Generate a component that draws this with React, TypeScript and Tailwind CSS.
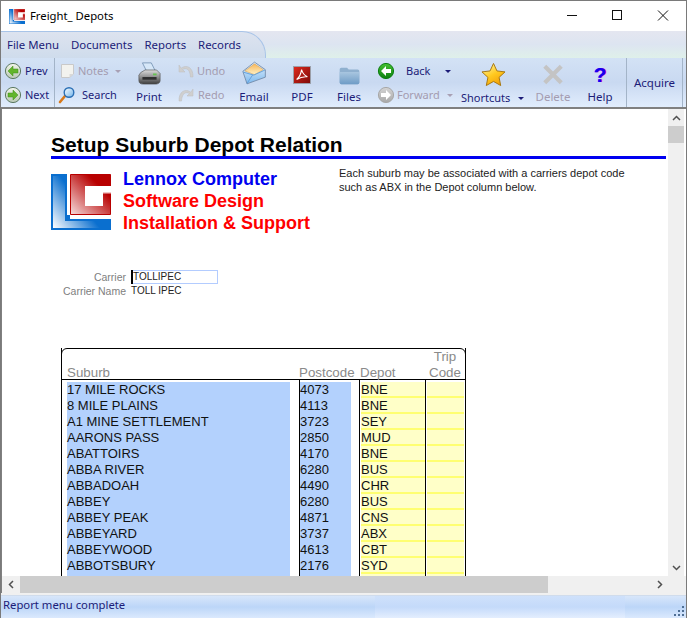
import React from "react";

const UI = "font-['Noto_Sans',sans-serif]";
const ARIAL = "font-['Liberation_Sans',Arial,sans-serif]";

const rows = [
  ["17 MILE ROCKS", "4073", "BNE"],
  ["8 MILE PLAINS", "4113", "BNE"],
  ["A1 MINE SETTLEMENT", "3723", "SEY"],
  ["AARONS PASS", "2850", "MUD"],
  ["ABATTOIRS", "4170", "BNE"],
  ["ABBA RIVER", "6280", "BUS"],
  ["ABBADOAH", "4490", "CHR"],
  ["ABBEY", "6280", "BUS"],
  ["ABBEY PEAK", "4871", "CNS"],
  ["ABBEYARD", "3737", "ABX"],
  ["ABBEYWOOD", "4613", "CBT"],
  ["ABBOTSBURY", "2176", "SYD"],
  ["", "", ""],
];

function Logo({ w, h, id }: { w: number; h: number; id: string }) {
  return (
    <svg width={w} height={h} viewBox="0 0 60 56" className="shrink-0 block">
      <defs>
        <linearGradient id={`${id}B`} x1="0" y1="1" x2="0.55" y2="0.62">
          <stop offset="0" stopColor="#ffffff" />
          <stop offset="1" stopColor="#0a6fcf" />
        </linearGradient>
        <linearGradient id={`${id}R`} x1="0" y1="1" x2="1" y2="0">
          <stop offset="0" stopColor="#f6dede" />
          <stop offset="0.72" stopColor="#b80000" />
          <stop offset="1" stopColor="#b80000" />
        </linearGradient>
      </defs>
      <path d="M0 0H16V41H19V45H60V56H0Z" fill="#0a6fcf" />
      <path d="M2 2H14V47H60V54H2Z" fill={`url(#${id}B)`} />
      <path d="M19.5 0.5H59.5V40.5H19.5Z" fill={`url(#${id}R)`} stroke="#b80000" strokeWidth="1" />
      <path d="M34 12H60V18H52V32H34Z" fill="#fff" />
      <rect x="52" y="18" width="8" height="1.5" fill="#f0c8c8" />
    </svg>
  );
}

function RoundArrow({ dir, kind }: { dir: "l" | "r"; kind: "soft" | "green" | "gray" }) {
  const id = `ra${dir}${kind}`;
  const stops =
    kind === "soft"
      ? ["#f2f5ea", "#b9c8b4"]
      : kind === "green"
      ? ["#46c232", "#0c7f10"]
      : ["#d4d4d4", "#a8a8a8"];
  const arrow = kind === "soft" ? "#62b52a" : "#fff";
  const pts = dir === "l" ? "M4 9L9 4V7H14V11H9V14Z" : "M14 9L9 4V7H4V11H9V14Z";
  return (
    <svg width="18" height="18" viewBox="0 0 18 18" className="shrink-0">
      <defs>
        <linearGradient id={id} x1="0" y1="0" x2="0" y2="1">
          <stop offset="0" stopColor={stops[0]} />
          <stop offset="1" stopColor={stops[1]} />
        </linearGradient>
      </defs>
      <circle cx="9" cy="9" r="7.6" fill={`url(#${id})`} stroke={kind === "soft" ? "#5d7a62" : stops[1]} strokeWidth="1" />
      <path d={pts} fill={arrow} stroke={kind === "soft" ? "#3f8f18" : "none"} strokeWidth="0.5" />
    </svg>
  );
}

function Caret({ grey }: { grey?: boolean }) {
  return (
    <svg width="6" height="3" viewBox="0 0 6 3" className="shrink-0">
      <path d="M0 0H6L3 3Z" fill={grey ? "#a8a0b4" : "#1c1c78"} />
    </svg>
  );
}

function NotesIcon() {
  return (
    <svg width="15" height="16" viewBox="0 0 15 16" className="shrink-0">
      <path d="M1.5 1.5H13.5V11L9.5 14.5H1.5Z" fill="#f2f2ee" stroke="#c9c9c9" />
      <path d="M13.5 11H9.5V14.5Z" fill="#d8d8d8" />
    </svg>
  );
}

function SearchIcon() {
  return (
    <svg width="18" height="18" viewBox="0 0 18 18" className="shrink-0 -ml-[2px]">
      <defs>
        <linearGradient id="glass" x1="0" y1="0" x2="1" y2="1">
          <stop offset="0" stopColor="#ffffff" />
          <stop offset="1" stopColor="#6fb3ea" />
        </linearGradient>
      </defs>
      <path d="M2 16L7 10" stroke="#d8791a" strokeWidth="2.6" strokeLinecap="round" />
      <circle cx="11" cy="6.5" r="4.8" fill="url(#glass)" stroke="#2a6fb5" strokeWidth="1.4" />
    </svg>
  );
}

function UndoIcon({ flip }: { flip?: boolean }) {
  return (
    <svg width="16" height="14" viewBox="0 0 16 14" className={flip ? "shrink-0 -scale-x-100" : "shrink-0"}>
      <path d="M1 1V8H7L4.6 5.6C7.5 3.6 12 4.5 12.5 13H15C15.5 3.5 8.5 0 3.2 4.2Z" fill="#cfcfcf" stroke="#bdbdbd" strokeWidth="0.5" />
    </svg>
  );
}

function PrinterIcon() {
  return (
    <svg width="23" height="23" viewBox="0 0 26 26">
      <defs>
        <linearGradient id="pr" x1="0" y1="0" x2="0" y2="1">
          <stop offset="0" stopColor="#dcdcdc" />
          <stop offset="0.5" stopColor="#8f8f8f" />
          <stop offset="1" stopColor="#3c3c3c" />
        </linearGradient>
      </defs>
      <path d="M5 1H15L20 11H10Z" fill="#d6e7f8" stroke="#6f8db0" strokeWidth="0.9" />
      <path d="M3 12L8 9H21L25 13V21C25 24 22 25 20 25H6C3 25 1 24 1 21V15Z" fill="url(#pr)" stroke="#4f4f4f" strokeWidth="0.7" />
      <rect x="5" y="17" width="16" height="3" fill="#2f2f2f" />
      <rect x="17" y="13" width="4" height="2" fill="#65c34f" />
    </svg>
  );
}

function MailIcon() {
  return (
    <svg width="25" height="24" viewBox="0 0 30 28">
      <defs>
        <linearGradient id="mb" x1="0" y1="0" x2="0" y2="1">
          <stop offset="0" stopColor="#e9f4ff" />
          <stop offset="1" stopColor="#7db9ee" />
        </linearGradient>
        <linearGradient id="mg" x1="0" y1="0" x2="0" y2="1">
          <stop offset="0" stopColor="#f8b75a" />
          <stop offset="1" stopColor="#fff2c8" />
        </linearGradient>
      </defs>
      <path d="M1 12L15 1L28 10L28 19L6 27L1 12Z" fill="url(#mb)" stroke="#6f86a3" />
      <path d="M3.5 11.5L15 3L25.5 10L15 16Z" fill="url(#mg)" stroke="#d79b4a" strokeWidth="0.6" />
      <path d="M1.5 13L14 16.5L27.5 10.5M6 26.5L13 16" fill="none" stroke="#5a9ad8" strokeWidth="1" />
    </svg>
  );
}

function PdfIcon() {
  return (
    <svg width="18" height="18" viewBox="0 0 20 20" className="mb-[1px]">
      <defs>
        <linearGradient id="pd" x1="0" y1="0" x2="1" y2="1">
          <stop offset="0" stopColor="#e02a1e" />
          <stop offset="1" stopColor="#7d0a08" />
        </linearGradient>
      </defs>
      <rect x="0.5" y="0.5" width="19" height="19" fill="url(#pd)" stroke="#9aa3ad" />
      <path d="M9.5 4C9 8 7 12.5 4 15C8 12.5 12 11.5 16 12C12.5 10.5 10.5 7.5 9.5 4Z" fill="none" stroke="#fff" strokeWidth="1.2" />
    </svg>
  );
}

function FolderIcon() {
  return (
    <svg width="23" height="18" viewBox="0 0 26 22">
      <defs>
        <linearGradient id="fd" x1="0" y1="0" x2="0" y2="1">
          <stop offset="0" stopColor="#a9c6e0" />
          <stop offset="1" stopColor="#6f9cc6" />
        </linearGradient>
      </defs>
      <path d="M1 3C1 2 2 1 3 1H10L12 3H23C24 3 25 4 25 5V19C25 20 24 21 23 21H3C2 21 1 20 1 19Z" fill="#8fb0cf" />
      <path d="M1 6H25V19C25 20 24 21 23 21H3C2 21 1 20 1 19Z" fill="url(#fd)" />
    </svg>
  );
}

function StarIcon() {
  return (
    <svg width="25" height="25" viewBox="0 0 26 25">
      <defs>
        <linearGradient id="st" x1="0.2" y1="0" x2="0.8" y2="1">
          <stop offset="0" stopColor="#fff39a" />
          <stop offset="0.5" stopColor="#ffc91f" />
          <stop offset="1" stopColor="#f19a05" />
        </linearGradient>
      </defs>
      <path d="M13 1L16.6 8.8L25 9.8L18.8 15.5L20.5 24L13 19.7L5.5 24L7.2 15.5L1 9.8L9.4 8.8Z" fill="url(#st)" stroke="#a67610" strokeWidth="1" strokeLinejoin="round" />
    </svg>
  );
}

function DeleteIcon() {
  return (
    <svg width="22" height="21" viewBox="0 0 24 22">
      <path d="M3 2L21 20M21 2L3 20" stroke="#c4c4c4" strokeWidth="4.6" />
    </svg>
  );
}

function BigTool({ w, icon, label, grey }: { w: string; icon: React.ReactNode; label: string; grey?: boolean }) {
  return (
    <div className={`${w} shrink-0 h-full flex flex-col items-center`}>
      <div className="h-[27px] flex items-end justify-center">{icon}</div>
      <div className={`mt-[4px] text-[11.5px] leading-[16px] whitespace-nowrap ${grey ? "text-[#a49cb0]" : "text-[#1c1c78]"}`}>{label}</div>
    </div>
  );
}

function SmallRow({ icon, label, grey, caret, gap }: { icon: React.ReactNode; label: string; grey?: boolean; caret?: React.ReactNode; gap: string }) {
  return (
    <div className="h-[24px] flex items-center whitespace-nowrap">
      {icon}
      <span className={`${gap} text-[11px] ${grey ? "text-[#a49cb0]" : "text-[#1c1c78]"}`}>{label}</span>
      {caret}
    </div>
  );
}

function Vsep() {
  return <div className="w-[1px] h-full shrink-0 bg-[#a3b4c8]" />;
}

function Cells({ suburb, post, depot, h }: { suburb: string; post: string; depot: string; h: "row" | "gap" }) {
  const row = h === "row";
  const height = row ? "h-[16px]" : "h-[2px]";
  const text = "text-[13px] leading-[16px] text-[#111] whitespace-nowrap";
  const yellow = row ? "bg-[#ffffc8] border-b-2 border-[#ffff70]" : "";
  return (
    <div className={`flex ${height}`}>
      <div className="w-[237px] pl-[5px] pr-[9px] shrink-0">
        <div className={`h-full ${text} ${row ? "bg-[#b3d1fd]" : ""}`}>{suburb}</div>
      </div>
      <div className="w-[60px] shrink-0 border-l border-black pr-[8px]">
        <div className={`h-full ${text} ${row ? "bg-[#b3d1fd]" : ""}`}>{post}</div>
      </div>
      <div className="w-[66px] shrink-0 border-l border-black pl-[1px]">
        <div className={`h-full box-border ${text} ${yellow}`}>{depot}</div>
      </div>
      <div className="flex-1 border-l border-black pl-[1px] pr-[1px]">
        <div className={`h-full box-border ${yellow}`} />
      </div>
    </div>
  );
}

export default function App() {
  return (
    <div className={`${UI} w-[687px] h-[618px] bg-white border-x border-t border-[#7a7a7a] flex flex-col overflow-hidden`}>
      {/* title bar */}
      <div className="h-[30px] shrink-0 flex items-center bg-white">
        <div className="ml-[8px]">
          <Logo w={16} h={15} id="lcs" />
        </div>
        <div className="ml-[5px] text-[11.3px] text-black whitespace-nowrap">Freight_ Depots</div>
        <div className="ml-auto flex items-center h-full">
          <svg width="46" height="30" viewBox="0 0 46 30">
            <path d="M19 14.5H29" stroke="#111" strokeWidth="1" />
          </svg>
          <svg width="46" height="30" viewBox="0 0 46 30">
            <rect x="18.5" y="9.5" width="9" height="9" fill="none" stroke="#111" strokeWidth="1" />
          </svg>
          <svg width="46" height="30" viewBox="0 0 46 30">
            <path d="M18 9.5L28 19.5M28 9.5L18 19.5" stroke="#111" strokeWidth="1" />
          </svg>
        </div>
      </div>

      {/* menu tab bar */}
      <div className="h-[27px] shrink-0 bg-gradient-to-b from-[#e4e6f0] via-[#dde5f1] to-[#dff0ea]">
        <div className="w-[265px] h-full rounded-tr-[24px] border-t border-r border-[#a8c4e8] bg-gradient-to-b from-[#dde3ef] to-[#cfdcec] flex items-center pl-[6px] gap-[12px] text-[11.4px] text-[#1c1c78] whitespace-nowrap">
          <span>File Menu</span>
          <span>Documents</span>
          <span>Reports</span>
          <span>Records</span>
        </div>
      </div>

      {/* toolbar */}
      <div className="h-[49px] shrink-0 flex bg-gradient-to-b from-[#d3e2f5] via-[#c9d9f1] to-[#e1edfd]">
        <div className="w-[53px] shrink-0 pl-[3px] pt-[1px] flex flex-col">
          <SmallRow icon={<RoundArrow dir="l" kind="soft" />} label="Prev" gap="ml-[3px]" />
          <SmallRow icon={<RoundArrow dir="r" kind="soft" />} label="Next" gap="ml-[3px]" />
        </div>
        <Vsep />
        <div className="w-[75px] shrink-0 pl-[5px] pt-[1px] flex flex-col">
          <SmallRow icon={<NotesIcon />} label="Notes" grey gap="ml-[3px] mr-[7px]" caret={<Caret grey />} />
          <SmallRow icon={<SearchIcon />} label="Search" gap="ml-[6px]" />
        </div>
        <BigTool w="w-[38px]" icon={<PrinterIcon />} label="Print" />
        <div className="w-[67px] shrink-0 pl-[10px] pt-[1px] flex flex-col">
          <SmallRow icon={<UndoIcon />} label="Undo" grey gap="ml-[3px]" />
          <SmallRow icon={<UndoIcon flip />} label="Redo" grey gap="ml-[4px]" />
        </div>
        <BigTool w="w-[38px]" icon={<MailIcon />} label="Email" />
        <BigTool w="w-[58px]" icon={<PdfIcon />} label="PDF" />
        <BigTool w="w-[36px]" icon={<FolderIcon />} label="Files" />
        <div className="w-[92px] shrink-0 pl-[10px] pt-[1px] flex flex-col">
          <SmallRow icon={<RoundArrow dir="l" kind="green" />} label="Back" gap="ml-[11px] mr-[15px]" caret={<Caret />} />
          <SmallRow icon={<RoundArrow dir="r" kind="gray" />} label="Forward" grey gap="ml-[2px] mr-[7px]" caret={<Caret grey />} />
        </div>
        <div className="w-[68px] shrink-0 flex flex-col items-start">
          <div className="h-[29px] w-full flex items-end pl-[22px]">
            <StarIcon />
          </div>
          <div className="mt-[3px] pl-[2px] flex items-center gap-[8px] text-[11px] leading-[16px] text-[#1c1c78] whitespace-nowrap">
            Shortcuts <Caret />
          </div>
        </div>
        <BigTool w="w-[52px]" icon={<DeleteIcon />} label="Delete" grey />
        <div className="w-[42px] shrink-0 flex flex-col items-center">
          <div className={`${ARIAL} h-[27px] flex items-end text-[21px] leading-[24px] font-bold text-[#1400f0] [text-shadow:1px_0_0_#d010d8]`}>
            <div className="-mb-[2px]">?</div>
          </div>
          <div className="mt-[4px] text-[11.5px] leading-[16px] text-[#1c1c78]">Help</div>
        </div>
        <div className="w-[5px] shrink-0" />
        <Vsep />
        <div className="w-[55px] shrink-0 flex items-center justify-center text-[11.5px] text-[#1c1c78]">Acquire</div>
        <Vsep />
      </div>

      {/* client area */}
      <div className="h-[2px] shrink-0 bg-[#808080]" />
      <div className="flex-1 min-h-0 flex flex-col">
        <div className="flex-1 min-h-0 flex border-l border-[#808080]">
          <div className={`${ARIAL} w-[666px] shrink-0 h-full overflow-hidden pl-[49px] pt-[25px] bg-white`}>
            <div className="text-[21px] leading-[22px] font-bold text-black whitespace-nowrap">Setup Suburb Depot Relation</div>
            <div className="w-[615px] h-[3px] bg-[#0000f0]" />
            <div className="mt-[7px] flex items-start">
              <div className="mt-[8px]">
                <Logo w={60} h={56} id="lcb" />
              </div>
              <div className="ml-[12px] mt-[2px] w-[216px] shrink-0 text-[18px] leading-[22px] font-bold text-[#ff0000] whitespace-nowrap">
                <div className="text-[#0000f0]">Lennox Computer</div>
                <div>Software Design</div>
                <div>Installation &amp; Support</div>
              </div>
              <div className="text-[11px] leading-[14px] text-[#222] w-[300px]">
                Each suburb may be associated with a carriers depot code such as ABX in the Depot column below.
              </div>
            </div>

            <div className="mt-[36px] flex items-center h-[14px] leading-[14px]">
              <div className="w-[75px] text-right text-[#808080] text-[10.5px]">Carrier</div>
              <div className="ml-[5px] w-[87px] h-[14px] border border-[#b3ccff] text-[#222] text-[10px] flex items-center">
                <span className="w-[2px] h-[14px] -ml-[1px] bg-black shrink-0" />
                TOLLIPEC
              </div>
            </div>
            <div className="flex items-center h-[14px] leading-[14px]">
              <div className="w-[75px] text-right text-[#808080] text-[10.5px] whitespace-nowrap">Carrier Name</div>
              <div className="ml-[5px] text-[#222] text-[10px]">TOLL IPEC</div>
            </div>

            <div className="mt-[50px] ml-[10px] w-[405px] border-x border-black">
              <div className="-mx-[1px] h-[32px] rounded-t-[6px] border border-black flex items-end text-[13.33px] leading-[16px] text-[#8a8a8a] whitespace-nowrap">
                <div className="w-[237px] pl-[5px] -mb-[2px]">Suburb</div>
                <div className="w-[60px] -mb-[2px]">Postcode</div>
                <div className="w-[66px] pl-[1px] -mb-[2px]">Depot</div>
                <div className="flex-1 text-center -mb-[2px]">
                  <div>Trip</div>
                  <div>Code</div>
                </div>
              </div>
              <Cells suburb="" post="" depot="" h="gap" />
              {rows.map((r, i) => (
                <Cells key={i} suburb={r[0]} post={r[1]} depot={r[2]} h="row" />
              ))}
            </div>
          </div>

          {/* vertical scrollbar */}
          <div className="w-[16px] shrink-0 h-full bg-[#f0f0f0] flex flex-col items-center">
            <div className="h-[17px] shrink-0 flex items-center justify-center">
              <svg width="9" height="6" viewBox="0 0 9 6">
                <path d="M1 5L4.5 1.5L8 5" fill="none" stroke="#505050" strokeWidth="1.5" />
              </svg>
            </div>
            <div className="w-full h-[17px] shrink-0 bg-[#cdcdcd]" />
            <div className="mt-auto h-[17px] shrink-0 flex items-center justify-center">
              <svg width="9" height="6" viewBox="0 0 9 6">
                <path d="M1 1L4.5 4.5L8 1" fill="none" stroke="#505050" strokeWidth="1.5" />
              </svg>
            </div>
          </div>
          <div className="flex-1 bg-white" />
        </div>

        {/* horizontal scrollbar */}
        <div className="h-[17px] shrink-0 bg-[#f0f0f0] flex items-center border-l border-[#808080]">
          <div className="w-[18px] shrink-0 flex items-center justify-center">
            <svg width="6" height="9" viewBox="0 0 6 9">
              <path d="M5 1L1.5 4.5L5 8" fill="none" stroke="#505050" strokeWidth="1.5" />
            </svg>
          </div>
          <div className="w-[528px] h-full shrink-0 bg-[#cdcdcd]" />
          <div className="ml-[103px] w-[18px] shrink-0 flex items-center justify-center">
            <svg width="6" height="9" viewBox="0 0 6 9">
              <path d="M1 1L4.5 4.5L1 8" fill="none" stroke="#505050" strokeWidth="1.5" />
            </svg>
          </div>
        </div>
        <div className="h-[2px] shrink-0 bg-[#f0f0f0]" />
      </div>

      {/* status bar */}
      <div className="h-[23px] shrink-0 flex bg-gradient-to-b from-[#d8e6fa] via-[#bcd6f8] to-[#dbe9fd] border-t border-[#d0dcec]">
        <div className="w-[374px] shrink-0 pl-[2px] pb-[3px] flex items-center text-[11.3px] text-[#1c1c78] whitespace-nowrap">Report menu complete</div>
        <div className="w-[250px] shrink-0 bg-gradient-to-b from-[#cfe1fb] via-[#c4dafa] to-[#e4eefe]" />
        <div className="flex-1 flex items-end justify-end pr-[2px] pb-[2px]">
          <svg width="10" height="10" viewBox="0 0 10 10">
            <path d="M8 0h2v2H8zM4 4h2v2H4zM8 4h2v2H8zM0 8h2v2H0zM4 8h2v2H4zM8 8h2v2H8z" fill="#4f6f95" />
          </svg>
        </div>
      </div>
    </div>
  );
}
